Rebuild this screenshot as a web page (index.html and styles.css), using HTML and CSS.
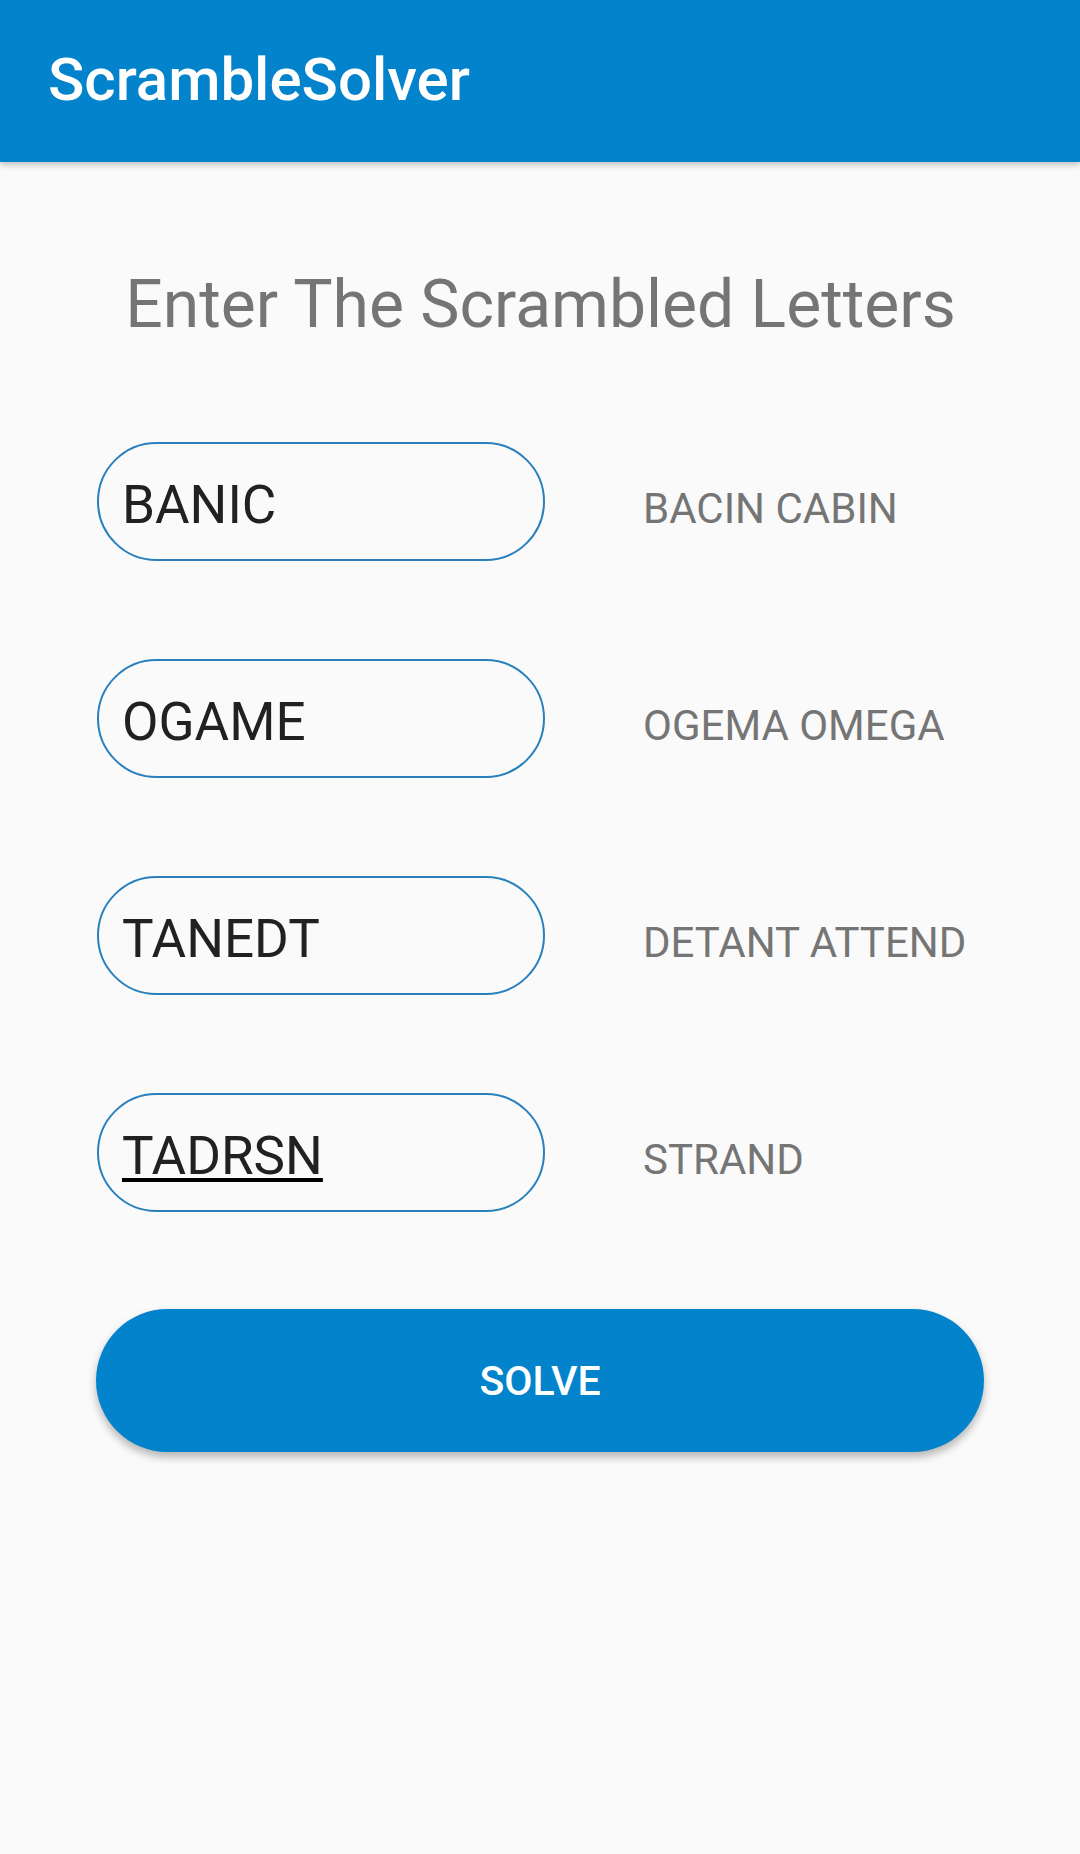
FILE: index.html
```html
<!DOCTYPE html>
<html>
<head>
<meta charset="utf-8">
<link rel="stylesheet" href="styles.css">
</head>
<body>
<header class="appbar">
  <h1 class="appbar-title">ScrambleSolver</h1>
</header>
<main class="content">
  <h2 class="heading">Enter The Scrambled Letters</h2>
  <div class="rows">
    <div class="row">
      <div class="field"><span class="field-text">BANIC</span></div>
      <div class="answer">BACIN CABIN</div>
    </div>
    <div class="row">
      <div class="field"><span class="field-text">OGAME</span></div>
      <div class="answer">OGEMA OMEGA</div>
    </div>
    <div class="row">
      <div class="field"><span class="field-text">TANEDT</span></div>
      <div class="answer">DETANT ATTEND</div>
    </div>
    <div class="row">
      <div class="field"><span class="field-text composing">TADRSN</span></div>
      <div class="answer">STRAND</div>
    </div>
  </div>
  <button class="solve">SOLVE</button>
</main>
</body>
</html>
```
FILE: styles.css
```css
html, body {
  margin: 0;
  padding: 0;
}
body {
  background: #fafafa;
  font-family: Roboto, "Noto Sans", "Liberation Sans", sans-serif;
  width: 1080px;
  min-height: 1854px;
}
.appbar {
  height: 162px;
  background: #0283cc;
  display: flex;
  align-items: center;
  padding-left: 48px;
  box-shadow: 0 3px 6px rgba(0, 0, 0, 0.22);
  position: relative;
  z-index: 1;
}
.appbar-title {
  margin: 0;
  color: #ffffff;
  font-size: 60px;
  font-weight: 500;
  line-height: 1;
  margin-top: -2px;
}
.content {
  padding: 0 96px 0 97px;
}
.heading {
  margin: 105px 0 0 0;
  text-align: center;
  font-weight: 400;
  font-size: 66px;
  line-height: 76px;
  color: #757575;
}
.rows {
  margin-top: 99px;
  display: flex;
  flex-direction: column;
  gap: 98px;
}
.row {
  display: flex;
  align-items: center;
}
.field {
  box-sizing: border-box;
  width: 448px;
  height: 119px;
  border: 2.5px solid #2980bd;
  border-radius: 60px;
  display: flex;
  align-items: center;
  padding-left: 23px;
}
.field-text {
  font-size: 53px;
  color: #212121;
  line-height: 1;
  margin-top: 8px;
}
.composing {
  text-decoration: underline;
  text-decoration-thickness: 4px;
  text-underline-offset: 4px;
  text-decoration-color: #000;
}
.answer {
  margin-left: 98px;
  margin-top: 15px;
  font-size: 42px;
  color: #757575;
  line-height: 1;
}
.solve {
  display: block;
  margin-top: 97px;
  width: 888px;
  margin-left: -1px;
  height: 143px;
  border: none;
  border-radius: 72px;
  background: #0283cc;
  color: #ffffff;
  font-family: Roboto, "Noto Sans", "Liberation Sans", sans-serif;
  font-size: 41px;
  font-weight: 500;
  box-shadow: 0 5px 8px rgba(0, 0, 0, 0.28);
}
```
